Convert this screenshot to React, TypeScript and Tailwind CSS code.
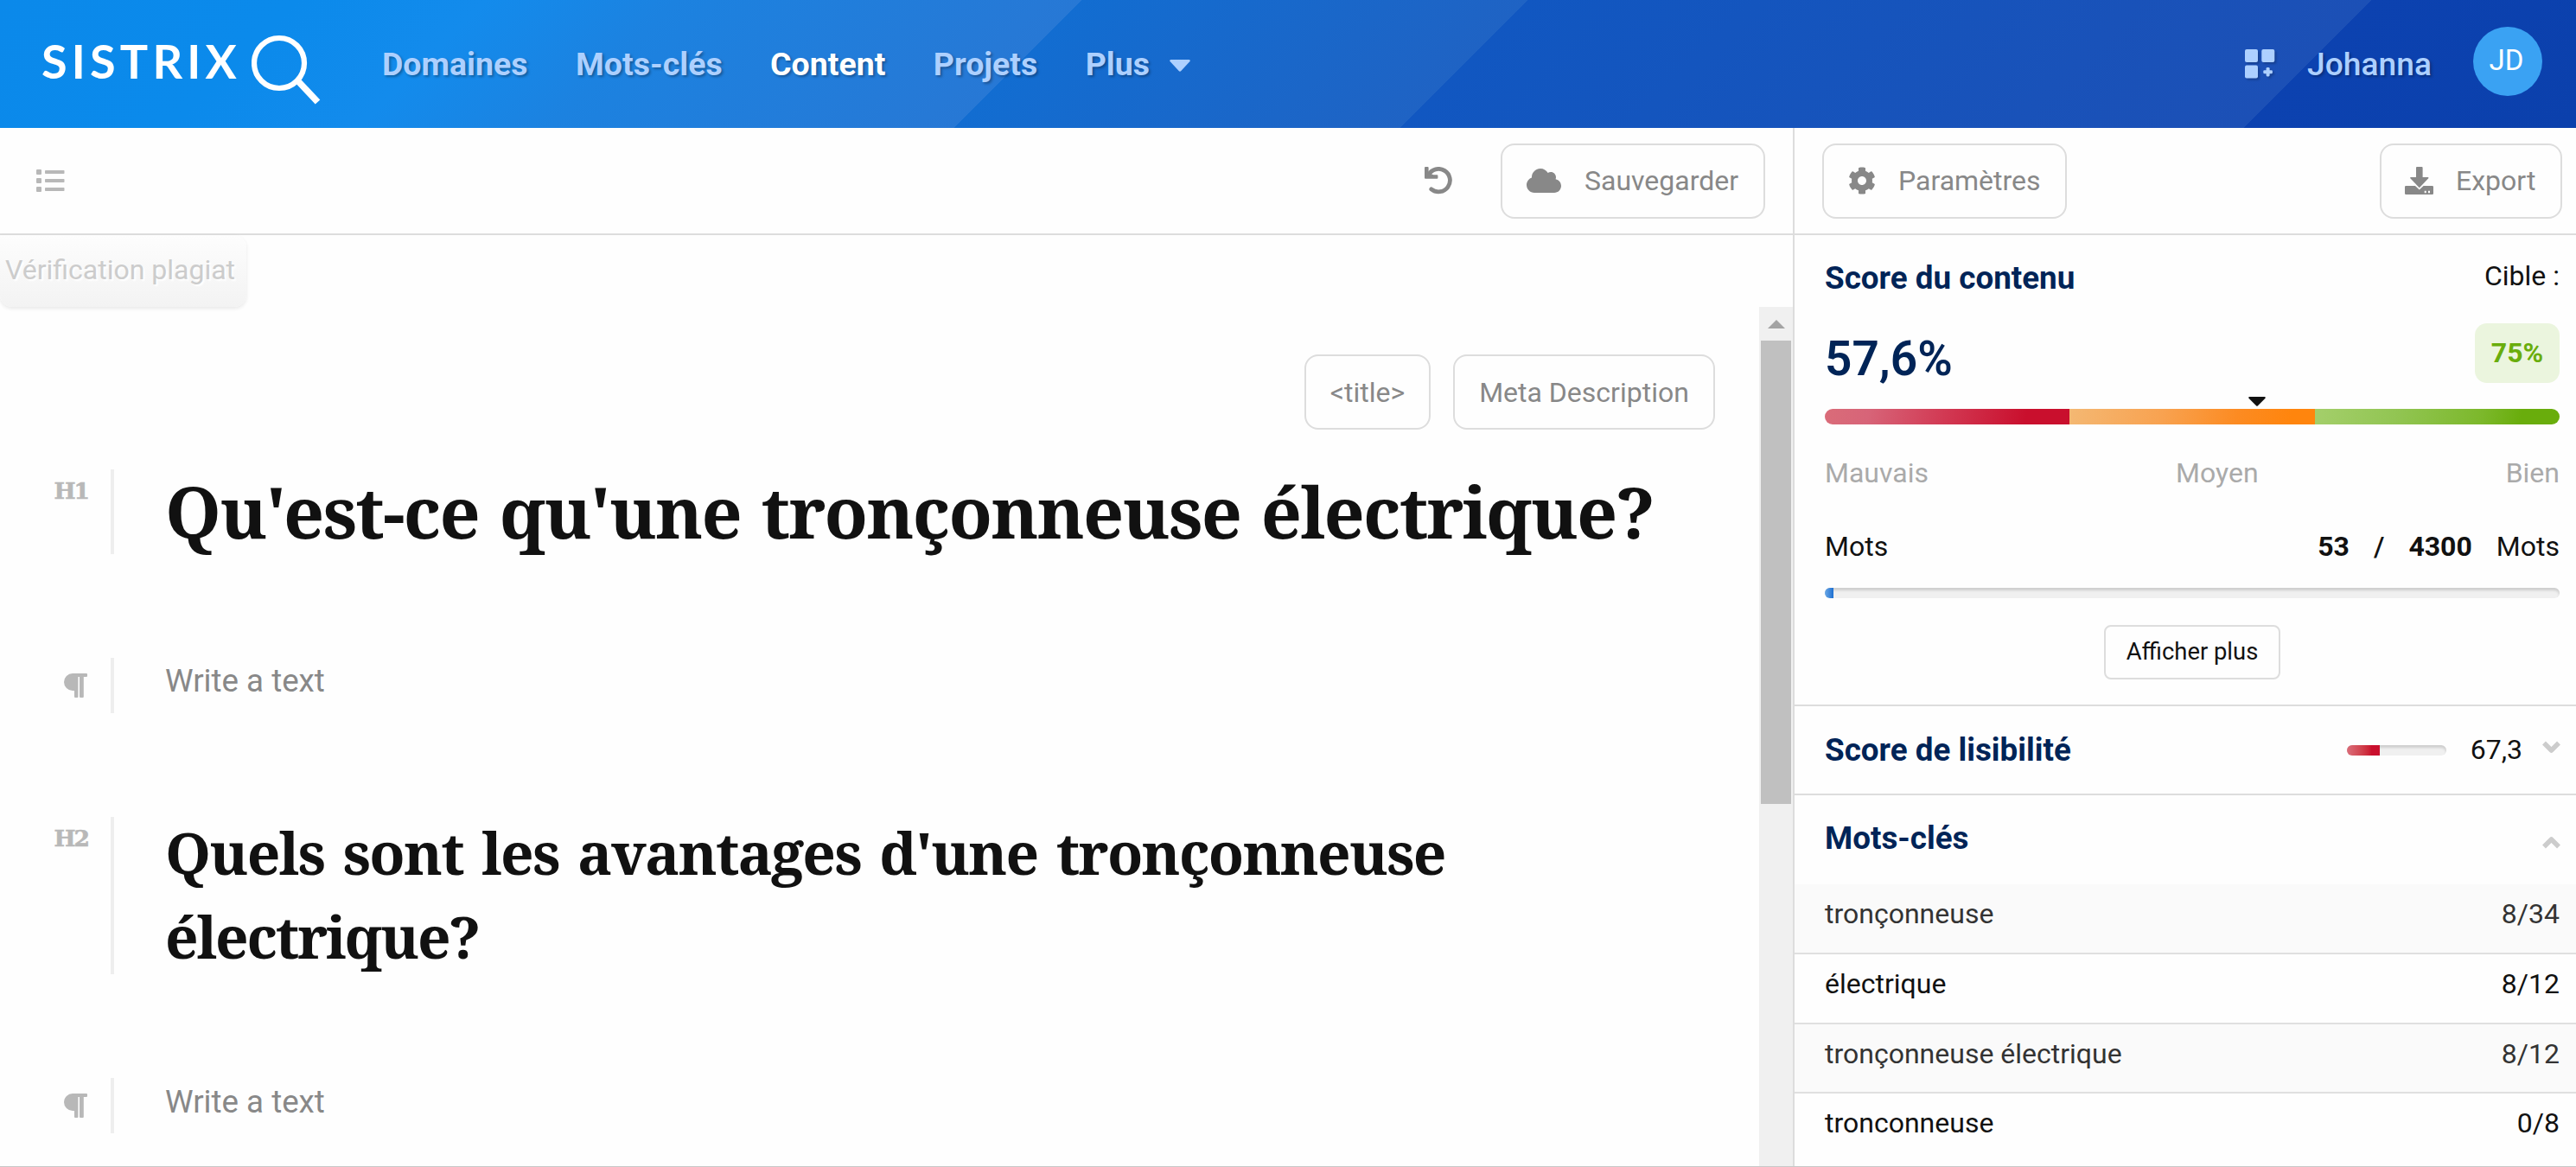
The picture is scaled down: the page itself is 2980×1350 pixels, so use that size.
import React from "react";
import { FaCloud, FaCog } from "react-icons/fa";

const navItems = [
  { label: "Domaines", active: false },
  { label: "Mots-clés", active: false },
  { label: "Content", active: true },
  { label: "Projets", active: false },
];

const keywords = [
  { word: "tronçonneuse", count: "8/34", row: "h-[81px] border-b-2 bg-[#fafafa] text-[#333]" },
  { word: "électrique", count: "8/12", row: "h-[81px] border-b-2 text-[#111]" },
  { word: "tronçonneuse électrique", count: "8/12", row: "h-[80px] border-b-2 bg-[#fafafa] text-[#333]" },
  { word: "tronconneuse", count: "0/8", row: "h-[84px] text-[#111]" },
];

function Magnifier() {
  return (
    <svg className="mt-[13px] ml-[15px] h-[82px] w-[80px]" viewBox="0 0 80 82" fill="none" stroke="#fff">
      <circle cx="32" cy="33" r="29" strokeWidth="6.2" />
      <path d="M53.5 53.5L76.5 78" strokeWidth="7.6" />
    </svg>
  );
}

function GridPlus() {
  return (
    <svg
      className="h-[34px] w-[35px] drop-shadow-[2px_2px_1px_rgba(0,0,0,0.2)]"
      viewBox="0 0 35 34"
      fill="#add0ff"
    >
      <rect x="0" y="0" width="15" height="15" rx="2" />
      <rect x="19.3" y="0" width="15" height="15" rx="2" />
      <rect x="0" y="18.5" width="15" height="15" rx="2" />
      <rect x="24.6" y="21" width="4" height="10.4" rx="1.3" />
      <rect x="21.3" y="24.2" width="10.6" height="4" rx="1.3" />
    </svg>
  );
}

function ListIcon() {
  return (
    <svg className="h-[26px] w-[33px]" viewBox="0 0 33 26" fill="#b8b8b8">
      {[0, 10, 20].map((y) => (
        <g key={y}>
          <rect x="0" y={y} width="6" height="6" rx="1" />
          <rect x="10" y={y + 1} width="22.5" height="4" rx="0.8" />
        </g>
      ))}
    </svg>
  );
}

function Undo() {
  return (
    <svg className="h-[32px] w-[34px]" viewBox="0 0 34 32" fill="none" stroke="#888">
      <path d="M4.500 9.500A13.200 13.200 0 1 1 7.800 25.800" strokeWidth="4.8" strokeLinecap="round" />
      <path
        d="M1 0h2.600a1 1 0 0 1 1 1v5.800l5.600 2.400h4.200a1 1 0 0 1 1 1v2.600a1 1 0 0 1-1 1H1a1 1 0 0 1-1-1V1a1 1 0 0 1 1-1z"
        fill="#888"
        stroke="none"
      />
    </svg>
  );
}

function Download() {
  return (
    <svg className="h-[32px] w-[33px]" viewBox="0 0 33 32" fill="#888">
      <path
        d="M1.200 22H12l4.800 4.600 4.800-4.600h10.200a1.200 1.200 0 0 1 1.200 1.200v7.600a1.200 1.200 0 0 1-1.200 1.200H1.200A1.200 1.200 0 0 1 0 30.800v-7.600A1.200 1.200 0 0 1 1.200 22zM22.700 27.800v2.400h2v-2.400zM27 27.800v2.400h2v-2.400z"
        fillRule="evenodd"
      />
      <path d="M14 0h5.600a1 1 0 0 1 1 1v11h6.200a.7.7 0 0 1 .5 1.200L16.800 24.300 6.300 13.200a.7.7 0 0 1 .5-1.200H13V1a1 1 0 0 1 1-1z" />
    </svg>
  );
}

function Pilcrow() {
  return (
    <svg className="mt-[18px] h-[28px] w-[27px]" viewBox="0 0 27 28" fill="#b8b8b8">
      <path d="M10 0H26a1 1 0 0 1 1 1v2a1 1 0 0 1-1 1h-3.200v23a1 1 0 0 1-1 1h-2.800a1 1 0 0 1-1-1V4h-1.600v23a1 1 0 0 1-1 1h-2.400a1 1 0 0 1-1-1v-7H10A10 10 0 0 1 10 0z" />
    </svg>
  );
}

function Chevron({ up = false }: { up?: boolean }) {
  return (
    <svg className="h-[15px] w-[21px]" viewBox="0 0 21 15" fill="none" stroke="#ccc" strokeWidth="5.5" strokeLinejoin="round">
      {up ? <path d="M2 12.500L10.500 4 19 12.500" /> : <path d="M2 2.500L10.500 11 19 2.500" />}
    </svg>
  );
}

function Block({ label, className, children }: { label: React.ReactNode; className: string; children: React.ReactNode }) {
  return (
    <div className={`flex ${className}`}>
      <div className="flex w-[128px] shrink-0 justify-end pr-[27px]">{label}</div>
      <div className="w-[4px] shrink-0 bg-[#eee]" />
      <div className="pl-[59px] whitespace-nowrap">{children}</div>
    </div>
  );
}

function HeadingLabel({ text }: { text: string }) {
  return (
    <span className="mt-[10px] -mr-px font-['DejaVu_Serif',serif] text-[26.500px] leading-[30px] font-bold tracking-[-2px] text-[#b8b8b8] [-webkit-text-stroke:0.6px_#b8b8b8]">
      {text}
    </span>
  );
}

function Header() {
  return (
    <header className="flex h-[148px] shrink-0 items-center bg-[linear-gradient(135deg,#0b89ea_0%,#0b8aeb_11%,#138bec_18%,#1c82e0_25%,#2778d5_40%,#126dd1_40%,#1f63c4_56.5%,#1157c1_56.5%,#1c50b6_87.7%,#0c42b0_87.7%,#0b40ac_100%)] pr-[39px] pl-[48px]">
      <div className="flex items-center text-white">
        <span className="mb-[6px] w-[228px] font-['Lato',sans-serif] text-[54px] leading-[60px] font-bold tracking-[5.200px] whitespace-nowrap">
          SISTRIX
        </span>
        <Magnifier />
      </div>
      <nav className="ml-[71px] flex items-center gap-[55.400px] text-[37.500px] leading-[48px] font-bold text-[#add0ff] [text-shadow:2px_2px_3px_rgba(0,0,0,0.3)]">
        {navItems.map((item) => (
          <span key={item.label} className={item.active ? "text-white" : ""}>
            {item.label}
          </span>
        ))}
        <span className="flex items-center gap-[23px]">
          Plus
          <svg className="mt-[4px] h-[14px] w-[24px]" viewBox="0 0 24 14" fill="#add0ff">
            <path d="M1.500 0h21a1.300 1.300 0 0 1 1 2.100L13.300 13a1.800 1.800 0 0 1-2.600 0L.5 2.100A1.300 1.300 0 0 1 1.500 0z" />
          </svg>
        </span>
      </nav>
      <div className="ml-auto flex items-center">
        <GridPlus />
        <span className="mb-px ml-[37px] text-[37.200px] leading-[48px] font-medium text-[#add0ff] [text-shadow:2px_2px_3px_rgba(0,0,0,0.3)]">
          Johanna
        </span>
        <span className="mb-[6px] ml-[48px] flex size-[80px] items-center justify-center rounded-full bg-[#3aa2f3] pr-[3px] pb-[2px] text-[33px] text-white">
          JD
        </span>
      </div>
    </header>
  );
}

function Editor() {
  return (
    <main className="flex w-[2074px] shrink-0 flex-col">
      <div className="flex h-[124px] shrink-0 items-center border-b-2 border-[#ddd] pr-[32px] pl-[42px]">
        <ListIcon />
        <div className="ml-auto">
          <Undo />
        </div>
        <button className="ml-[54px] flex h-[87px] w-[306px] items-center rounded-[16px] border-2 border-[#ddd] pl-[28px] text-[32px] text-[#888]">
          <FaCloud className="size-[40px]" />
          <span className="ml-[27px]">Sauvegarder</span>
        </button>
      </div>
      <div className="flex h-[83px] w-[285px] shrink-0 items-center rounded-b-[14px] rounded-tr-[14px] bg-linear-to-b from-[#fdfdfd] to-[#f3f3f3] pb-[3px] pl-[6px] text-[32px] whitespace-nowrap text-[#ccc] shadow-[0_2px_4px_rgba(0,0,0,0.09)] [text-shadow:2px_2px_2px_#fff]">
        Vérification plagiat
      </div>
      <div className="flex grow">
        <div className="grow">
          <div className="mt-[55px] mr-[51px] flex justify-end gap-[26px] text-[32px] text-[#888]">
            <button className="h-[87px] w-[146px] rounded-[16px] border-2 border-[#ddd]">&lt;title&gt;</button>
            <button className="h-[87px] w-[303px] rounded-[16px] border-2 border-[#ddd]">Meta Description</button>
          </div>
          <Block label={<HeadingLabel text="H1" />} className="mt-[46px] h-[98px]">
            <h1 className="font-['Noto_Serif','Liberation_Serif',serif] text-[82.500px] leading-[97px] font-bold tracking-[-1.750px] text-[#111] [word-spacing:4px]">
              Qu'est-ce qu'une tronçonneuse électrique?
            </h1>
          </Block>
          <Block label={<Pilcrow />} className="mt-[120px] h-[64px]">
            <p className="text-[36.700px] leading-[53px] text-[#888]">Write a text</p>
          </Block>
          <Block label={<HeadingLabel text="H2" />} className="mt-[120px] h-[182px]">
            <h2 className="-mt-[7px] font-['Noto_Serif','Liberation_Serif',serif] text-[67.500px] leading-[97px] font-bold tracking-[-1.750px] text-[#111] [word-spacing:5.500px]">
              Quels sont les avantages d'une tronçonneuse
              <br />
              <span className="tracking-[-2.200px]">électrique?</span>
            </h2>
          </Block>
          <Block label={<Pilcrow />} className="mt-[120px] h-[64px]">
            <p className="text-[36.700px] leading-[55px] text-[#888]">Write a text</p>
          </Block>
        </div>
        <div className="flex w-[39px] shrink-0 flex-col items-center bg-[#f0f0f0]">
          <svg className="mt-[15px] h-[10px] w-[20px]" viewBox="0 0 20 10" fill="#a3a3a3">
            <path d="M10 0L20 10H0z" />
          </svg>
          <div className="mt-[14px] h-[536px] w-[35px] bg-[#c0c0c0]" />
        </div>
      </div>
    </main>
  );
}

function Sidebar() {
  return (
    <aside className="flex grow flex-col border-l-2 border-[#ddd] text-[32px] leading-[40px] text-[#111]">
      <div className="flex h-[124px] shrink-0 items-center justify-between border-b-2 border-[#ddd] pr-[16px] pl-[32px] text-[#888]">
        <button className="flex h-[87px] w-[283px] items-center rounded-[16px] border-2 border-[#ddd] pl-[28px]">
          <FaCog className="size-[32px]" />
          <span className="ml-[26px]">Paramètres</span>
        </button>
        <button className="flex h-[87px] w-[211px] items-center rounded-[16px] border-2 border-[#ddd] pl-[27px]">
          <Download />
          <span className="ml-[26px]">Export</span>
        </button>
      </div>
      <section className="border-b-2 border-[#ddd] pr-[19px] pl-[35px]">
        <div className="flex h-[102px] items-center justify-between pb-[4px]">
          <h3 className="pt-[1px] text-[36.800px] font-bold text-[#002457]">Score du contenu</h3>
          <span className="pb-[4px]">Cible :</span>
        </div>
        <div className="flex h-[69px] justify-between">
          <span className="pt-[14px] text-[55px] leading-[55px] font-semibold text-[#002457]">57,6%</span>
          <span className="flex w-[98px] items-center justify-center rounded-[14px] bg-[#ebf5de] pb-[2px] font-bold text-[#69ad0c]">
            75%
          </span>
        </div>
        <svg className="mt-[16px] ml-[490px] h-[11px] w-[20px]" viewBox="0 0 20 11" fill="#111">
          <path d="M1.200 0h17.600a1 1 0 0 1 .7 1.700L11 10.300a1.400 1.400 0 0 1-2 0L.5 1.700A1 1 0 0 1 1.200 0z" />
        </svg>
        <div className="mt-[3px] flex h-[18px] overflow-hidden rounded-full">
          <div className="grow bg-[linear-gradient(100deg,#da6c79,#d76478_18%,#d23a54_48%,#c90f2d_82%)]" />
          <div className="grow bg-[linear-gradient(100deg,#f4b873,#f8a250_38%,#fc8b22_68%,#ff850d_90%)]" />
          <div className="grow bg-[linear-gradient(100deg,#a4cf6b,#92c553_33%,#7cb82b_68%,#69ad0c_84%)]" />
        </div>
        <div className="mt-[36px] flex justify-between text-[#aaa]">
          <span>Mauvais</span>
          <span>Moyen</span>
          <span>Bien</span>
        </div>
        <div className="mt-[45px] flex gap-[28px]">
          <span className="mr-auto">Mots</span>
          <b>53</b>
          <b className="font-medium">/</b>
          <b>4300</b>
          <span>Mots</span>
        </div>
        <div className="mt-[28px] flex h-[12px] overflow-hidden rounded-full bg-[#f0f0f0] shadow-[inset_0_3px_3px_rgba(0,0,0,0.14)]">
          <div className="w-[10px] bg-linear-to-r from-[#6aa8e6] to-[#1a6fd0]" />
        </div>
        <button className="mx-auto mt-[31px] mb-[29px] block h-[63px] w-[204px] rounded-[8px] border-2 border-[#ddd] text-[27.400px] leading-[59px]">
          Afficher plus
        </button>
      </section>
      <section className="flex h-[103px] shrink-0 items-center border-b-2 border-[#ddd] pr-[18px] pl-[35px]">
        <h3 className="mr-auto text-[36.800px] font-bold text-[#002457]">Score de lisibilité</h3>
        <div className="flex h-[12px] w-[115px] overflow-hidden rounded-full bg-[#f0f0f0] shadow-[inset_0_3px_3px_rgba(0,0,0,0.14)]">
          <div className="w-[38px] bg-linear-to-r from-[#da6c79] to-[#c90f2d] to-75%" />
        </div>
        <span className="ml-[28px] pb-px">67,3</span>
        <span className="mb-[6px] ml-[23px]">
          <Chevron />
        </span>
      </section>
      <section className="flex h-[103px] shrink-0 items-center justify-between pr-[18px] pb-[3px] pl-[35px]">
        <h3 className="text-[36.800px] font-bold text-[#002457]">Mots-clés</h3>
        <span className="mt-[8px]">
          <Chevron up />
        </span>
      </section>
      <ul>
        {keywords.map((k) => (
          <li key={k.word} className={`flex justify-between border-[#e0e0e0] pr-[19px] pl-[35px] leading-[69px] ${k.row}`}>
            <span>{k.word}</span>
            <span>{k.count}</span>
          </li>
        ))}
      </ul>
    </aside>
  );
}

export default function App() {
  return (
    <div className="flex h-[1350px] w-[2980px] flex-col overflow-hidden border-b border-[#c8c8c8] bg-[#fefefe] font-['Roboto',sans-serif]">
      <Header />
      <div className="flex min-h-0 grow">
        <Editor />
        <Sidebar />
      </div>
    </div>
  );
}
